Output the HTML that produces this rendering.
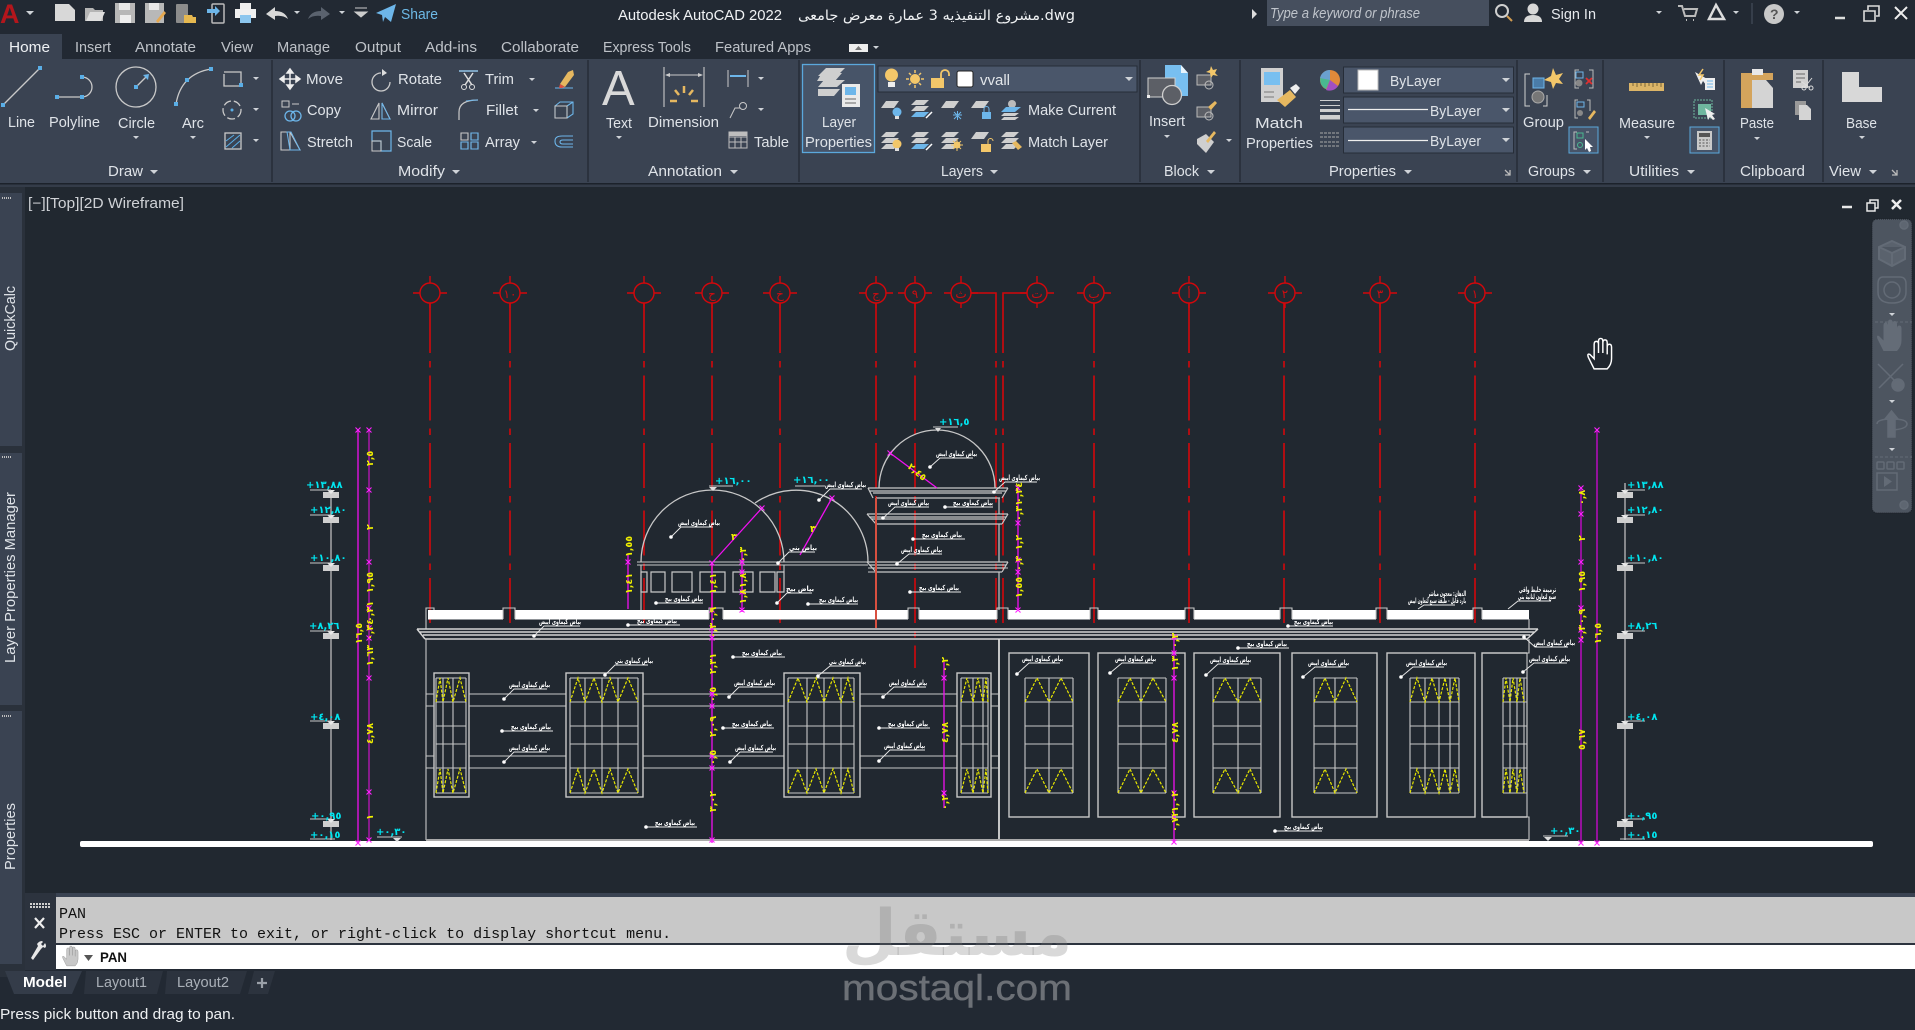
<!DOCTYPE html>
<html><head><meta charset="utf-8"><title>Autodesk AutoCAD 2022</title>
<style>
html,body{margin:0;padding:0;background:#222933;width:1915px;height:1030px;overflow:hidden}
svg{display:block;position:absolute;left:0;top:0}
text{font-family:"Liberation Sans","DejaVu Sans",sans-serif}
.t{font-size:14.500px;fill:#dfe3e8}
.b{font-size:14.500px;fill:#e6e9ed}
.m{font-family:"Liberation Mono",monospace;font-size:15px;fill:#111}
.l{font-family:"DejaVu Sans",sans-serif;font-size:7px;font-weight:bold;fill:#fff}
.c{font-family:"DejaVu Sans",sans-serif;font-size:10px;font-weight:bold;fill:#00e6f0}
.y{font-family:"DejaVu Sans",sans-serif;font-size:9.500px;font-weight:bold;fill:#f0f000}
.r{font-family:"DejaVu Sans",sans-serif;font-size:12px;fill:#d00c10}
</style></head><body>
<svg width="1915" height="1030" viewBox="0 0 1915 1030" xmlns="http://www.w3.org/2000/svg">
<defs>
<path id="t" d="M0 0h8l-4 4z" fill="#cfd3d8"/>
<path id="ts" d="M0 0h6l-3 3z" fill="#cfd3d8"/>
<g id="bub" fill="none" stroke="#d4070b" stroke-width="1.400"><circle r="10"/><path d="M-17 0H-10M10 0H17M0 -17V-10M0 10V15"/></g>
<g id="sq"><rect x="-2" y="-2" width="4" height="4" fill="#5aaee6"/></g>
<path id="x" d="M-2.500 -2.500L2.500 2.500M-2.500 2.500L2.500 -2.500" stroke="#ff20ff" stroke-width="1.100" fill="none"/>
<g id="sheet"><path d="M5 0H18L13 7H0Z" fill="#cfcfcf"/></g>
<g id="stack"><path d="M5 0H18L13 5H0Z" fill="#cfcfcf"/><path d="M5 6H18L13 11H0Z" fill="#cfcfcf"/><path d="M5 12H18L13 17H0Z" fill="#cfcfcf"/></g>
<g id="stackb"><path d="M5 0H18L13 5H0Z" fill="#cfcfcf"/><path d="M5 6H18L13 11H0Z" fill="#cfcfcf"/><path d="M5 12H18L13 17H0Z" fill="#6db6ea"/></g>
<path id="hand" d="M7 22L3 14Q2 11 4 12L7 15V5Q7 3 8.500 3Q10 3 10 5V11V3Q10 1 11.500 1Q13 1 13 3V11V4Q13 2 14.500 2Q16 2 16 4V12V7Q16 5 17.500 5Q19 5 19 7V15Q19 19 16 22Z"/>
<g id="lvl"><rect x="-8" y="2" width="16" height="6" fill="#cfcfcf"/><path d="M-4 0H4L0 4Z" fill="#e8e8e8"/></g>
</defs>

<!-- backgrounds -->
<rect width="1915" height="1030" fill="#222933"/>
<rect y="59" width="1915" height="124" fill="#3a4352"/>
<rect y="0" width="1915" height="59" fill="#222933"/>
<rect y="183" width="1915" height="1.500" fill="#1c222b"/>
<rect y="184.500" width="1915" height="3" fill="#343c49"/>
<rect y="187" x="22" width="1893" height="708" fill="#212830"/>
<rect x="0" y="187" width="25" height="790" fill="#2a313b"/>
<rect x="0" y="193" width="22" height="253" fill="#3a4352"/>
<rect x="0" y="453" width="22" height="252" fill="#3a4352"/>
<rect x="0" y="711" width="22" height="253" fill="#3a4352"/>
<rect y="34" width="62" height="25" fill="#3a4352"/>

<!-- separators -->
<path d="M272 60V182M588 60V182M799 60V182M1140 60V182M1240 60V182M1517 60V182M1603 60V182M1724 60V182M1823 60V182" stroke="#262d38" stroke-width="1.500"/>

<!-- tabs -->
<g>
<text x="9" y="52" class="t" style="fill:#eef1f4" textLength="41" lengthAdjust="spacingAndGlyphs">Home</text>
<g style="opacity:.82">
<text x="75" y="52" class="t" textLength="36" lengthAdjust="spacingAndGlyphs">Insert</text>
<text x="135" y="52" class="t" textLength="61" lengthAdjust="spacingAndGlyphs">Annotate</text>
<text x="221" y="52" class="t" textLength="32" lengthAdjust="spacingAndGlyphs">View</text>
<text x="277" y="52" class="t" textLength="53" lengthAdjust="spacingAndGlyphs">Manage</text>
<text x="355" y="52" class="t" textLength="46" lengthAdjust="spacingAndGlyphs">Output</text>
<text x="425" y="52" class="t" textLength="52" lengthAdjust="spacingAndGlyphs">Add-ins</text>
<text x="501" y="52" class="t" textLength="78" lengthAdjust="spacingAndGlyphs">Collaborate</text>
<text x="603" y="52" class="t" textLength="88" lengthAdjust="spacingAndGlyphs">Express Tools</text>
<text x="715" y="52" class="t" textLength="96" lengthAdjust="spacingAndGlyphs">Featured Apps</text>
</g></g>
<rect x="849" y="44" width="19" height="8" fill="#eee"/><path d="M855 50h7l-3.500-4z" fill="#777"/><use href="#ts" x="873" y="46"/>

<!-- title bar text -->
<text x="618" y="20" class="b" textLength="164" lengthAdjust="spacingAndGlyphs" style="fill:#f0f2f4">Autodesk AutoCAD 2022</text>
<text x="798" y="20" style="font-size:14px;fill:#f0f2f4;font-family:'DejaVu Sans',sans-serif" textLength="277" lengthAdjust="spacingAndGlyphs">مشروع التنفيذيه 3 عمارة معرض جامعى.dwg</text>
<path d="M1252 9l5 5-5 5z" fill="#ddd"/>
<rect x="1267" y="0" width="222" height="26" fill="#464f5e"/>
<text x="1270" y="18" style="font-size:14.500px;font-style:italic;fill:#bfc4cb" textLength="150" lengthAdjust="spacingAndGlyphs">Type a keyword or phrase</text>
<g fill="none" stroke="#cfcfcf" stroke-width="2"><circle cx="1502" cy="11" r="6"/></g><path d="M1507 16l5 5" stroke="#d09a50" stroke-width="2"/>
<circle cx="1533" cy="9" r="5.500" fill="#d8d8d8"/><path d="M1524 22q0-7 9-7t9 7z" fill="#d8d8d8"/>
<text x="1551" y="19" class="b" textLength="45" lengthAdjust="spacingAndGlyphs">Sign In</text>
<use href="#ts" x="1656" y="11"/>
<path d="M1678 6h4l3 10h10l2-7h-13M1686 20h1M1693 20h1" fill="none" stroke="#bbb" stroke-width="2"/>
<path d="M1716 5l-7 14h15z" fill="none" stroke="#ddd" stroke-width="2.500"/><use href="#ts" x="1733" y="11"/>
<path d="M1752 3V24" stroke="#4a5260"/>
<circle cx="1774" cy="14" r="10" fill="#c8c8c8"/><text x="1770" y="19" style="font-size:14px;font-weight:bold;fill:#555">?</text>
<use href="#ts" x="1794" y="11"/>
<path d="M1835 18h10" stroke="#ddd" stroke-width="2.500"/>
<path d="M1864 11h11v10h-11zM1868 10V6h11v10h-3" fill="none" stroke="#ddd" stroke-width="1.600"/>
<path d="M1895 7L1907 19M1907 7L1895 19" stroke="#eee" stroke-width="2"/>

<!-- QAT -->
<text x="0" y="23" style="font-size:27px;font-weight:bold;fill:#b3161c">A</text>
<use href="#t" x="26" y="11"/>
<path d="M55 4h14l6 6v11H55z" fill="#d8d8d8"/>
<path d="M85 8h8l2 2h8v11H85z" fill="#b5b5b5"/><path d="M86 21l4-9h15l-4 9z" fill="#dedede"/>
<path d="M115 3h20v20h-20z" fill="#b8b8b8"/><rect x="119" y="3" width="11" height="7" fill="#e8e8e8"/><rect x="120" y="15" width="11" height="8" fill="#eee"/>
<path d="M145 3h19v20h-19z" fill="#b8b8b8"/><rect x="149" y="3" width="10" height="7" fill="#e8e8e8"/><path d="M156 21l8-10 2 2-8 10z" fill="#e6a84f"/>
<rect x="176" y="4" width="12" height="19" rx="1" fill="#8c8c8c"/><path d="M184 15h8l1 2h3v6h-12z" fill="#e6b850"/>
<rect x="212" y="4" width="12" height="19" rx="1" fill="none" stroke="#bbb" stroke-width="1.500"/><path d="M207 9h8v-3l5 5-5 5v-3h-8z" fill="#6db6ea"/>
<rect x="240" y="3" width="11" height="6" fill="#eee"/><rect x="235" y="9" width="21" height="9" fill="#f0f0f0"/><rect x="240" y="15" width="11" height="8" fill="#8cc6ee"/>
<path d="M266 14l9-7v4q10 0 13 8-5-4-13-3v4z" fill="#d8d8d8"/><use href="#ts" x="294" y="11"/>
<path d="M330 14l-9-7v4q-10 0-13 8 5-4 13-3v4z" fill="#5a626e"/><use href="#ts" x="339" y="11"/>
<path d="M355 8h12M355 12h12l-6 5z" stroke="#ccc" fill="#ccc"/>
<path d="M376 13L396 4l-5 18-6-5-2 5-1-7z" fill="#6db6ea"/>
<text x="401" y="19" style="font-size:14.500px;fill:#6db9e6" textLength="37" lengthAdjust="spacingAndGlyphs">Share</text>

<!-- Draw panel -->
<g fill="none" stroke="#c9c9c9" stroke-width="1.300">
<path d="M3 105L40 68"/>
<path d="M57 97H82A10 10 0 0 0 82 77"/>
<circle cx="136" cy="87" r="20"/><path d="M136 87L147 76"/>
<path d="M176 104Q181 74 211 69"/>
<path d="M224 74V86H241V72H224"/>
<circle cx="232" cy="110" r="9" stroke-dasharray="8 3"/>
<rect x="225" y="133" width="16" height="16"/>
</g>
<path d="M226 147L240 135M226 141L234 135M232 148L240 141" stroke="#5aaee6" fill="none"/>
<circle cx="232" cy="110" r="1.500" fill="#5aaee6"/>
<path d="M149 74l-6 1 5 5z" fill="#6db6ea"/>
<use href="#sq" x="3" y="105"/><use href="#sq" x="40" y="68"/><use href="#sq" x="57" y="97"/><use href="#sq" x="82" y="97"/><use href="#sq" x="82" y="77"/><use href="#sq" x="136" y="87"/><use href="#sq" x="176" y="104"/><use href="#sq" x="187" y="80"/><use href="#sq" x="211" y="69"/><use href="#sq" x="241" y="85"/>
<text x="8" y="127" class="t" textLength="27" lengthAdjust="spacingAndGlyphs">Line</text>
<text x="49" y="127" class="t" textLength="51" lengthAdjust="spacingAndGlyphs">Polyline</text>
<text x="118" y="128" class="t" textLength="37" lengthAdjust="spacingAndGlyphs">Circle</text>
<text x="182" y="128" class="t" textLength="22" lengthAdjust="spacingAndGlyphs">Arc</text>
<use href="#ts" x="133" y="136"/><use href="#ts" x="190" y="136"/>
<use href="#ts" x="253" y="77"/><use href="#ts" x="253" y="108"/><use href="#ts" x="253" y="139"/>
<text x="108" y="176" class="t" textLength="35" lengthAdjust="spacingAndGlyphs">Draw</text><use href="#t" x="150" y="170"/>

<!-- Modify -->
<path d="M290 70v18M281 79h18M290 69l-3 4h6zM290 89l-3-4h6zM280 79l4-3v6zM300 79l-4-3v6z" stroke="#eee" stroke-width="1.500" fill="#eee"/>
<path d="M381 74a9 9 0 1 0 9 9" fill="none" stroke="#c9c9c9" stroke-width="1.300" transform="translate(0 -1)"/><path d="M382 69l5 4-5 3z" fill="#ddd"/>
<path d="M282 101h7v6h-7zM292 104h7" fill="none" stroke="#c9c9c9"/><circle cx="290" cy="116" r="5" fill="none" stroke="#6db6ea" stroke-width="1.300"/><circle cx="296" cy="116" r="5" fill="none" stroke="#6db6ea" stroke-width="1.300"/>
<path d="M371 119L379 103V119ZM390 119L382 103V119Z" fill="none" stroke="#c9c9c9" stroke-width="1.100"/><path d="M390 119L382 103V119Z" fill="none" stroke="#6db6ea"/>
<path d="M281 132h9v18h-9zM290 132l10 18h-10" fill="none" stroke="#c9c9c9" stroke-width="1.100"/><path d="M290 150l-3-18h4l9 18z" fill="none" stroke="#6db6ea"/>
<path d="M372 131h19v20h-10v-10h-9z" fill="none" stroke="#6db6ea" stroke-width="1.200"/><rect x="372" y="141" width="9" height="10" fill="none" stroke="#c9c9c9"/>
<path d="M459 71h19M464 73l8 12M473 73l-8 12" stroke="#ddd" stroke-width="1.500" fill="none"/><circle cx="464" cy="87" r="2.500" fill="none" stroke="#ddd"/><circle cx="472" cy="87" r="2.500" fill="none" stroke="#ddd"/><path d="M459 71h19" stroke="#6db6ea"/>
<path d="M459 120V112Q459 100 478 100" fill="none" stroke="#c9c9c9" stroke-width="1.200"/><path d="M466 101Q473 100 478 100" stroke="#6db6ea" fill="none"/>
<path d="M461 133h7v7h-7zM471 133h7v7h-7zM461 142h7v7h-7zM471 142h7v7h-7z" fill="none" stroke="#c9c9c9" stroke-width="1.100"/><path d="M461 142h7v7h-7zM471 142h7v7h-7zM471 133h7v7h-7z" fill="none" stroke="#6db6ea" stroke-width="1.100"/>
<path d="M573 70l1 5-9 12-5-3 8-12z" fill="#e6b860"/><path d="M555 88h18" stroke="#6db6ea"/><path d="M560 84l5 3-3 1h-3z" fill="#dd5040"/>
<path d="M555 106h12v12h-12zM555 106l5-4h13v12l-6 4M567 106l6-4" fill="none" stroke="#6db6ea" stroke-width="1.100"/><rect x="555" y="106" width="12" height="12" fill="none" stroke="#c9c9c9"/>
<path d="M573 136H562Q555 136 555 141Q555 147 562 147H573M573 140H563Q560 140 560 142Q560 144 563 144H573" fill="none" stroke="#6db6ea" stroke-width="1.100"/>
<use href="#ts" x="529" y="78"/><use href="#ts" x="533" y="109"/><use href="#ts" x="531" y="141"/>
<text x="306" y="84" class="t" textLength="37" lengthAdjust="spacingAndGlyphs">Move</text>
<text x="398" y="84" class="t" textLength="44" lengthAdjust="spacingAndGlyphs">Rotate</text>
<text x="485" y="84" class="t" textLength="29" lengthAdjust="spacingAndGlyphs">Trim</text>
<text x="307" y="115" class="t" textLength="34" lengthAdjust="spacingAndGlyphs">Copy</text>
<text x="397" y="115" class="t" textLength="41" lengthAdjust="spacingAndGlyphs">Mirror</text>
<text x="486" y="115" class="t" textLength="32" lengthAdjust="spacingAndGlyphs">Fillet</text>
<text x="307" y="147" class="t" textLength="46" lengthAdjust="spacingAndGlyphs">Stretch</text>
<text x="397" y="147" class="t" textLength="35" lengthAdjust="spacingAndGlyphs">Scale</text>
<text x="485" y="147" class="t" textLength="35" lengthAdjust="spacingAndGlyphs">Array</text>
<text x="398" y="176" class="t" textLength="47" lengthAdjust="spacingAndGlyphs">Modify</text><use href="#t" x="452" y="170"/>

<!-- Annotation -->
<text x="602" y="105" style="font-size:49px;fill:#d9d9d9">A</text>
<text x="606" y="128" class="t" textLength="26" lengthAdjust="spacingAndGlyphs">Text</text><use href="#ts" x="616" y="136"/>
<path d="M664 67V107M704 67V107M666 75H702" stroke="#c9c9c9" fill="none" stroke-width="1.100"/><path d="M665 75l5-2v4zM703 75l-5-2v4z" fill="#ccc"/>
<path d="M684 86v7M675 90l4 5M693 90l-4 5M670 101h7M698 101h-7" stroke="#e6b860" stroke-width="2.500" fill="none"/>
<text x="648" y="127" class="t" textLength="71" lengthAdjust="spacingAndGlyphs">Dimension</text>
<path d="M728 70V87M748 70V87M730 76H746" stroke="#c9c9c9" fill="none"/><path d="M730 76H746" stroke="#6db6ea" stroke-width="2"/>
<use href="#ts" x="758" y="77"/>
<circle cx="743" cy="106" r="3.500" fill="none" stroke="#c9c9c9"/><path d="M740 108L735 108L730 118" fill="none" stroke="#c9c9c9"/>
<use href="#ts" x="758" y="108"/>
<rect x="729" y="132" width="18" height="16" fill="none" stroke="#bdbdbd"/><path d="M729 137H747M729 142H747M735 137V148M741 137V148" stroke="#bdbdbd"/><rect x="729" y="132" width="18" height="4" fill="#bdbdbd"/>
<text x="754" y="147" class="t" textLength="35" lengthAdjust="spacingAndGlyphs">Table</text>
<text x="648" y="176" class="t" textLength="74" lengthAdjust="spacingAndGlyphs">Annotation</text><use href="#t" x="730" y="170"/>

<!-- Layers -->
<rect x="802.500" y="64.500" width="72" height="88" fill="#475468" stroke="#5ba8dc" stroke-width="1.300"/>
<path d="M826 68h19l-8 8h-19zM822 73h20l-7 8h-18zM824 80h21l-8 7h-19zM818 89h22l-6 7h-16z" fill="#cfcfcf"/>
<rect x="842" y="84" width="18" height="23" fill="#eaeaea"/><rect x="845" y="87" width="11" height="8" fill="#6db6ea"/><path d="M845 99h11M845 103h11" stroke="#666"/>
<text x="822" y="127" class="t" textLength="34" lengthAdjust="spacingAndGlyphs">Layer</text>
<text x="805" y="147" class="t" textLength="67" lengthAdjust="spacingAndGlyphs">Properties</text>
<rect x="878" y="66" width="259" height="26" fill="#4a566a" stroke="#262d38"/>
<circle cx="891.500" cy="75" r="6.500" fill="#f3c76a"/><rect x="888" y="82" width="7" height="5" fill="#eee"/>
<circle cx="915" cy="79" r="5" fill="#f3c76a"/><path d="M915 70v3M915 85v3M906 79h3M921 79h3M909 73l2 2M921 73l-2 2M909 85l2-2M921 85l-2-2" stroke="#f3c76a" stroke-width="1.500"/>
<rect x="931" y="78" width="13" height="10" fill="#f3c76a"/><path d="M941 78v-4a4 4 0 0 1 8 0v2" fill="none" stroke="#f3c76a" stroke-width="1.800"/>
<rect x="957" y="71" width="16" height="16" rx="2" fill="#fff" stroke="#222"/>
<text x="980" y="85" class="t" textLength="30" lengthAdjust="spacingAndGlyphs" style="fill:#e2e6ea">vvall</text>
<use href="#t" x="1125" y="77"/>
<!-- layer small icons -->
<g transform="translate(881 101)"><use href="#sheet"/><circle cx="16" cy="11" r="4.500" fill="#6db6ea"/><rect x="14" y="15" width="4" height="3" fill="#ddd"/></g>
<g transform="translate(911 100)"><use href="#stackb"/><path d="M21 12l-6 6" stroke="#fff" stroke-width="1.500"/></g>
<g transform="translate(941 101)"><use href="#sheet"/><path d="M12 14h9M16.500 10v9M13 11l7 7M20 11l-7 7" stroke="#6db6ea"/></g>
<g transform="translate(971 101)"><use href="#sheet"/><rect x="11" y="11" width="9" height="7" fill="#6db6ea"/><path d="M13 11V8a2.500 2.500 0 0 1 5 0v3" fill="none" stroke="#6db6ea"/></g>
<g transform="translate(1001 100)"><circle cx="11" cy="4" r="4" fill="#bbb"/><path d="M5 7H20L14 12H0Z" fill="#6db6ea"/><path d="M3 13H18L14 16H0ZM3 17H18L14 20H0Z" fill="#cfcfcf"/></g>
<g transform="translate(881 132)"><use href="#stack"/><circle cx="16" cy="12" r="4.500" fill="#f3c76a"/><rect x="14" y="16" width="4" height="3" fill="#ddd"/></g>
<g transform="translate(911 132)"><use href="#stackb"/><path d="M15 18l6-6" stroke="#fff" stroke-width="1.500"/></g>
<g transform="translate(941 132)"><use href="#stack"/><circle cx="16" cy="13" r="3.500" fill="#f3c76a"/><path d="M16 7v12M10 13h12M12 9l8 8M20 9l-8 8" stroke="#f3c76a"/></g>
<g transform="translate(971 132)"><use href="#sheet"/><rect x="10" y="12" width="10" height="8" fill="#f3c76a"/><path d="M17 12V9a2.500 2.500 0 0 1 5 0" fill="none" stroke="#f3c76a"/></g>
<g transform="translate(1001 132)"><use href="#stack"/><path d="M11 11l6 7 4-3-6-6z" fill="#e6b860"/></g>
<text x="1028" y="115" class="t" textLength="88" lengthAdjust="spacingAndGlyphs">Make Current</text>
<text x="1028" y="147" class="t" textLength="80" lengthAdjust="spacingAndGlyphs">Match Layer</text>
<text x="941" y="176" class="t" textLength="42" lengthAdjust="spacingAndGlyphs">Layers</text><use href="#t" x="990" y="170"/>

<!-- Block -->
<path d="M1165 65h16l7 8v23h-23z" fill="#78bff0"/><path d="M1181 65l7 8h-7z" fill="#e8f4fc"/>
<rect x="1148" y="78" width="27" height="19" fill="#5c5f66" stroke="#d0d0d0"/><circle cx="1172" cy="95" r="9.500" fill="#5c5f66" stroke="#cfcfcf" stroke-width="1.300"/><rect x="1147" y="95" width="3" height="3" fill="#eee"/>
<rect x="1197" y="75" width="14" height="10" fill="#5c5f66" stroke="#bbb"/><circle cx="1209" cy="85" r="4" fill="none" stroke="#bbb"/><path d="M1211 66l2 4 4-1-2 4 3 3-5-1-2 3-1-5-4-1 4-2z" fill="#f3c76a"/>
<rect x="1197" y="107" width="14" height="10" fill="#5c5f66" stroke="#bbb"/><circle cx="1209" cy="116" r="4" fill="none" stroke="#bbb"/><path d="M1208 107l7-6 2 2-6 7z" fill="#e6b860"/>
<path d="M1197 139l9-5 8 8-8 11-9-9z" fill="#cfcfcf"/><path d="M1206 141l8-10 2 2-8 10z" fill="#e6b860"/>
<use href="#ts" x="1226" y="139"/>
<text x="1149" y="126" class="t" textLength="36" lengthAdjust="spacingAndGlyphs">Insert</text><use href="#ts" x="1164" y="135"/>
<text x="1164" y="176" class="t" textLength="35" lengthAdjust="spacingAndGlyphs">Block</text><use href="#t" x="1207" y="170"/>

<!-- Properties -->
<rect x="1261" y="68" width="22" height="34" fill="#d0d0d0"/><rect x="1264" y="72" width="16" height="13" fill="#78bff0"/><path d="M1264 92h10M1264 97h10" stroke="#777"/>
<path d="M1277 100l13-10 6 7-11 10z" fill="#e6b860"/><path d="M1290 88l5 6 5-6-4-4z" fill="#eee"/>
<text x="1255" y="128" class="t" textLength="48" lengthAdjust="spacingAndGlyphs">Match</text>
<text x="1246" y="148" class="t" textLength="67" lengthAdjust="spacingAndGlyphs">Properties</text>
<circle cx="1330" cy="80" r="10" fill="#e08a3a"/><path d="M1330 80L1322 74A10 10 0 0 0 1326 89Z" fill="#4ab890"/><path d="M1330 80L1326 90A10 10 0 0 0 1338 86Z" fill="#a050c0"/><path d="M1330 80L1320 78A10 10 0 0 1 1330 70Z" fill="#6aa0d0"/>
<path d="M1320 100.500h20M1320 105.500h20" stroke="#cfcfcf"/><rect x="1320" y="109" width="20" height="3" fill="#cfcfcf"/><rect x="1320" y="115" width="20" height="4.500" fill="#cfcfcf"/>
<path d="M1320 133h20M1320 137h20M1320 142h20M1320 146h20" stroke="#a8a8a8" stroke-dasharray="3 1"/>
<g fill="#4a566a" stroke="#262d38"><rect x="1343.500" y="67" width="170" height="26"/><rect x="1343.500" y="97" width="170" height="26"/><rect x="1343.500" y="127" width="170" height="26"/></g>
<rect x="1358" y="70" width="20" height="20" fill="#fff" stroke="#bbb"/>
<path d="M1348 109.500h80M1348 140.500h80" stroke="#eee" stroke-width="1.200"/>
<text x="1390" y="86" class="t" textLength="51" lengthAdjust="spacingAndGlyphs">ByLayer</text>
<text x="1430" y="116" class="t" textLength="51" lengthAdjust="spacingAndGlyphs">ByLayer</text>
<text x="1430" y="146" class="t" textLength="51" lengthAdjust="spacingAndGlyphs">ByLayer</text>
<use href="#t" x="1502" y="78"/><use href="#t" x="1502" y="108"/><use href="#t" x="1502" y="138"/>
<text x="1329" y="176" class="t" textLength="67" lengthAdjust="spacingAndGlyphs">Properties</text><use href="#t" x="1404" y="170"/>
<path d="M1505 170l5 5M1510 170v5h-5" stroke="#bbb" fill="none" stroke-width="1.300"/>

<!-- Groups -->
<path d="M1530 74h-5v32h5M1547 95v11h-4" fill="none" stroke="#d0d0d0"/><rect x="1533" y="78" width="11" height="10" fill="#4a7ca8" stroke="#6db6ea"/><circle cx="1538" cy="97" r="6" fill="#777" stroke="#aaa"/>
<path d="M1553 68l3 7 7-2-4 6 4 5-7-1-3 6-2-7-7-2 7-4z" fill="#f3c76a"/>
<text x="1523" y="127" class="t" textLength="41" lengthAdjust="spacingAndGlyphs">Group</text>
<path d="M1579 70h-4v18h4M1589 70h4v18h-4" fill="none" stroke="#bbb"/><rect x="1576" y="72" width="7" height="6" fill="none" stroke="#6db6ea"/><circle cx="1579" cy="83" r="3.500" fill="#888"/><path d="M1586 78l6 6M1592 78l-6 6" stroke="#e03030" stroke-width="1.800"/>
<path d="M1578 100h-3v18h3M1587 100h3v11" fill="none" stroke="#bbb"/><rect x="1577" y="102" width="7" height="5" fill="none" stroke="#6db6ea"/><circle cx="1580" cy="113" r="3" fill="#888"/><path d="M1588 118l6-8 2 2-6 8z" fill="#e6b860"/>
<rect x="1569" y="127" width="29" height="26" fill="#475468" stroke="#5ba8dc"/><path d="M1577 132h-3v17h3M1586 132h3" fill="none" stroke="#bbb"/><rect x="1577" y="133" width="6" height="5" fill="none" stroke="#4ab890"/><circle cx="1580" cy="145" r="2.500" fill="none" stroke="#4ab890"/><path d="M1585 139l8 8-3 0 1 4-2 1-2-4-2 2z" fill="#fff"/>
<text x="1528" y="176" class="t" textLength="47" lengthAdjust="spacingAndGlyphs">Groups</text><use href="#t" x="1583" y="170"/>

<!-- Utilities -->
<rect x="1629" y="83" width="35" height="8" fill="#dcb567"/><path d="M1633 83v3M1637 83v4M1641 83v3M1645 83v4M1649 83v3M1653 83v4M1657 83v3M1661 83v4" stroke="#7a6638"/>
<text x="1619" y="128" class="t" textLength="56" lengthAdjust="spacingAndGlyphs">Measure</text><use href="#ts" x="1644" y="136"/>
<path d="M1695 72l6 13 2-4 3 4 2-1-3-4 4 0z" fill="#eee"/><rect x="1705" y="78" width="10" height="12" fill="#eee"/><path d="M1707 81h6M1707 84h6M1707 87h6" stroke="#6db6ea"/><path d="M1703 69l-4 6h4l-3 5" stroke="#f3c76a" fill="none" stroke-width="1.500"/>
<rect x="1694" y="100" width="18" height="18" fill="none" stroke="#6fb79f" stroke-dasharray="2 1"/><rect x="1698" y="104" width="13" height="11" fill="#6fb79f"/><path d="M1705 108l3 12 2-3 3 3 2-1-3-4 3-1z" fill="#eee"/>
<rect x="1690" y="127" width="29" height="26" fill="#475468" stroke="#5ba8dc"/><rect x="1697" y="131" width="15" height="19" fill="#c9c9c9"/><rect x="1699" y="133" width="11" height="4" fill="#555"/><path d="M1699 140h11M1699 143h11M1699 146h11" stroke="#555" stroke-dasharray="2 1.500"/>
<text x="1629" y="176" class="t" textLength="50" lengthAdjust="spacingAndGlyphs">Utilities</text><use href="#t" x="1687" y="170"/>

<!-- Clipboard -->
<path d="M1741 73h32v7h-21v28h-11z" fill="#d4a45c"/><rect x="1752" y="69" width="11" height="6" fill="#e8e8e8"/><path d="M1752 80h14l7 8v20h-21z" fill="#d4d4d4"/>
<text x="1740" y="128" class="t" textLength="34" lengthAdjust="spacingAndGlyphs">Paste</text><use href="#ts" x="1754" y="137"/>
<rect x="1793" y="70" width="15" height="18" fill="#d0d0d0"/><path d="M1796 74h9M1796 78h9M1796 82h5" stroke="#666"/><path d="M1802 82l8 6M1812 78l-8 10" stroke="#ddd"/><circle cx="1804" cy="88" r="2" fill="none" stroke="#ddd"/><circle cx="1811" cy="88" r="2" fill="none" stroke="#ddd"/>
<rect x="1795" y="101" width="11" height="14" fill="#9a9a9a"/><path d="M1799 105h8l4 4v11h-12z" fill="#d4d4d4"/>
<text x="1740" y="176" class="t" textLength="65" lengthAdjust="spacingAndGlyphs">Clipboard</text>

<!-- View -->
<path d="M1842 72h17v15h23v15h-40z" fill="#d8d8d8"/>
<text x="1846" y="128" class="t" textLength="31" lengthAdjust="spacingAndGlyphs">Base</text><use href="#ts" x="1859" y="136"/>
<text x="1829" y="176" class="t" textLength="32" lengthAdjust="spacingAndGlyphs">View</text><use href="#t" x="1869" y="170"/>
<path d="M1892 170l5 5M1897 170v5h-5" stroke="#bbb" fill="none" stroke-width="1.300"/>

<!-- left palettes -->
<path d="M2 198h9M2 457h9M2 716h9" stroke="#bdbdbd" stroke-width="2" stroke-dasharray="1 1"/>
<text transform="translate(15 351) rotate(-90)" class="t" textLength="65" lengthAdjust="spacingAndGlyphs">QuickCalc</text>
<text transform="translate(15 663) rotate(-90)" class="t" textLength="171" lengthAdjust="spacingAndGlyphs">Layer Properties Manager</text>
<text transform="translate(15 870) rotate(-90)" class="t" textLength="67" lengthAdjust="spacingAndGlyphs">Properties</text>

<!-- viewport label -->
<text x="28" y="208" style="font-size:14.500px;fill:#cfd2d6" textLength="156" lengthAdjust="spacingAndGlyphs">[−][Top][2D Wireframe]</text>
<path d="M1842 207h10" stroke="#e8e8e8" stroke-width="2.500"/>
<path d="M1867 203h8v8h-8zM1870 203v-3h8v8h-3" fill="none" stroke="#e8e8e8" stroke-width="1.500"/>
<path d="M1892 200l9 9M1901 200l-9 9" stroke="#eee" stroke-width="2.500"/>

<!-- nav bar -->
<rect x="1872" y="219" width="40" height="294" rx="5" fill="#4d5560" stroke="#1a1f26" stroke-dasharray="1 1"/>
<g fill="none" stroke="#636b76" stroke-width="1.500">
<circle cx="1904" cy="225" r="4" fill="#5e6671"/>
<path d="M1892 241l13 6v12l-13 7-13-7v-12zM1879 247l13 6 13-6M1892 253v13" stroke-width="2" fill="#5a626d"/>
<path d="M1883 277h17q6 0 6 7v8q0 11-14 11t-14-11v-8q0-7 5-7z"/><circle cx="1892" cy="290" r="8"/>
<path d="M1875 322h37M1875 457h37" stroke-dasharray="3 2" stroke-width="1"/>
<path d="M1878 364L1901 387M1903 364L1879 388"/><circle cx="1898" cy="385" r="6" fill="#636b76"/>
<path d="M1877 424q0-5 15-5t15 5-15 6"/><path d="M1888 419v18h7v-18h3l-6.500-8-6.500 8z" fill="#636b76"/>
<rect x="1877" y="462" width="7" height="7" rx="1"/><rect x="1887" y="462" width="7" height="7" rx="1"/><rect x="1897" y="462" width="7" height="7" rx="1"/>
<rect x="1877" y="473" width="20" height="17"/>
<circle cx="1904" cy="505" r="4" fill="#5e6671"/>
</g>
<use href="#hand" transform="translate(1873 318) scale(1.500)" fill="#646c77"/>
<path d="M1884 487v-11l8 5.500z" fill="#636b76"/>
<use href="#ts" x="1889" y="313"/><use href="#ts" x="1889" y="400"/><use href="#ts" x="1889" y="448"/>

<!-- drawing: axes -->
<g stroke="#d4070b" stroke-width="1.600" fill="none">
<g stroke-dasharray="45 8 6.500 8">
<path d="M430 308V629M510 308V629M644 308V624M712 308V610M780 308V628M876 308V629M915 308V668M1094 308V629M1189 308V629M1284 308V629M1380 308V629M1475 308V629M996 308V629M1003 308V629"/>
</g>
<path d="M430 303v5M510 303v5M644 303v5M712 303v5M780 303v5M876 303v5M915 303v5M1094 303v5M1189 303v5M1284 303v5M1380 303v5M1475 303v5"/>
<path d="M971 293H996V308M1027 293H1003V308"/>
</g>
<use href="#bub" x="430" y="293"/><use href="#bub" x="510" y="293"/><use href="#bub" x="644" y="293"/><use href="#bub" x="712" y="293"/><use href="#bub" x="780" y="293"/><use href="#bub" x="876" y="293"/><use href="#bub" x="915" y="293"/><use href="#bub" x="961" y="293"/><use href="#bub" x="1037" y="293"/><use href="#bub" x="1094" y="293"/><use href="#bub" x="1189" y="293"/><use href="#bub" x="1285" y="293"/><use href="#bub" x="1380" y="293"/><use href="#bub" x="1475" y="293"/>
<text x="510" y="298" class="r" text-anchor="middle">١٠</text><text x="712" y="298" class="r" text-anchor="middle">ح</text><text x="780" y="298" class="r" text-anchor="middle">خ</text><text x="876" y="298" class="r" text-anchor="middle">ج</text><text x="915" y="298" class="r" text-anchor="middle">٩</text><text x="961" y="298" class="r" text-anchor="middle">ث</text><text x="1037" y="298" class="r" text-anchor="middle">ت</text><text x="1094" y="298" class="r" text-anchor="middle">ب</text><text x="1189" y="298" class="r" text-anchor="middle">أ</text><text x="1285" y="298" class="r" text-anchor="middle">٢</text><text x="1380" y="298" class="r" text-anchor="middle">٣</text><text x="1475" y="298" class="r" text-anchor="middle">١</text>

<!-- drawing: building -->
<g fill="#fff">
<rect x="428" y="610" width="75" height="9.500"/><rect x="515" y="610" width="194" height="9.500"/><rect x="723" y="610" width="185" height="9.500"/><rect x="919" y="610" width="78" height="9.500"/><rect x="1008" y="610" width="82" height="9.500"/><rect x="1098" y="610" width="87" height="9.500"/><rect x="1194" y="610" width="86" height="9.500"/><rect x="1292" y="610" width="84" height="9.500"/><rect x="1387" y="610" width="86" height="9.500"/><rect x="1482" y="610" width="47" height="9.500"/>
<rect x="80" y="841" width="1793" height="6" rx="2"/>
</g>
<g fill="none" stroke="#c8c8c8" stroke-width="1.100">
<!-- merlons -->
<path d="M426 629V608H434V610M503 619V608H515V619M709 619V608H723V619M908 619V608H919V619M997 619V608H1008V619M1090 619V608H1098V619M1185 619V608H1194V619M1280 619V608H1292V619M1376 619V608H1387V619M1473 619V608H1482V619M1529 619V629"/>
<!-- cornice -->
<path d="M417 629H1538M420 632H1534M423 635H1530M425 639H1527M417 629L425 639M1538 629L1527 639" stroke-width="1.500" stroke="#d4d4d4"/>
<!-- walls -->
<path d="M426 639V840M1529 639V653H1527V817H1529V840" stroke-width="1.100"/>
<path d="M999 639V840" stroke-width="1.800" stroke="#d8d8d8"/>
<path d="M426 840H1529" stroke="#aaa" stroke-width="2"/>
<!-- bands -->
<path d="M426 694H434M426 706H434M426 756H434M426 768H434M469 694H566M469 706H566M469 756H566M469 768H566M643 694H784M643 706H784M643 756H784M643 768H784M860 694H957M860 706H957M860 756H957M860 768H957M991 694H999M991 706H999M991 756H999M991 768H999"/>
<!-- window outers -->
<rect x="434" y="673" width="35" height="124" stroke-width="1.400"/><rect x="566" y="673" width="77" height="124" stroke-width="1.400"/><rect x="784" y="673" width="76" height="124" stroke-width="1.400"/><rect x="957" y="673" width="34" height="124" stroke-width="1.400"/>
<rect x="1009" y="653" width="80" height="164" stroke-width="1.400"/><rect x="1098" y="653" width="87" height="164" stroke-width="1.400"/><rect x="1194" y="653" width="86" height="164" stroke-width="1.400"/><rect x="1292" y="653" width="85" height="164" stroke-width="1.400"/><rect x="1387" y="653" width="88" height="164" stroke-width="1.400"/><path d="M1527 653H1482V817H1527" stroke-width="1.400"/>
<!-- grids -->
<path d="M436 678V793M443 678V793M453 678V793M466 678V793M436 678H466M436 702H466M436 726H466M436 744H466M436 768H466M436 793H466"/>
<path d="M570 678V793M585 678V793M602 678V793M618 678V793M638 678V793M570 678H638M570 702H638M570 726H638M570 744H638M570 768H638M570 793H638"/>
<path d="M788 678V793M807 678V793M824 678V793M841 678V793M854 678V793M788 678H854M788 702H854M788 726H854M788 744H854M788 768H854M788 793H854"/>
<path d="M961 678V793M973 678V793M983 678V793M988 678V793M961 678H988M961 702H988M961 726H988M961 744H988M961 768H988M961 793H988"/>
<path d="M1025 678V793M1049 678V793M1073 678V793M1025 678H1073M1025 702H1073M1025 726H1073M1025 744H1073M1025 768H1073M1025 793H1073"/>
<path d="M1118 678V793M1141 678V793M1166 678V793M1118 678H1166M1118 702H1166M1118 726H1166M1118 744H1166M1118 768H1166M1118 793H1166"/>
<path d="M1213 678V793M1238 678V793M1261 678V793M1213 678H1261M1213 702H1261M1213 726H1261M1213 744H1261M1213 768H1261M1213 793H1261"/>
<path d="M1314 678V793M1335 678V793M1357 678V793M1314 678H1357M1314 702H1357M1314 726H1357M1314 744H1357M1314 768H1357M1314 793H1357"/>
<path d="M1410 678V793M1425 678V793M1439 678V793M1450 678V793M1459 678V793M1410 678H1459M1410 702H1459M1410 726H1459M1410 744H1459M1410 768H1459M1410 793H1459"/>
<path d="M1503 678V793M1510 678V793M1517 678V793M1524 678V793M1527 678V793M1503 678H1527M1503 702H1527M1503 726H1527M1503 744H1527M1503 768H1527M1503 793H1527"/>
<!-- domes -->
<path d="M641 562A71.500 72 0 0 1 784 562" stroke-width="1.300"/>
<path d="M755 503A72 72 0 0 1 868 562" stroke-width="1.300"/>
<path d="M879 488A58 58 0 0 1 995 488" stroke-width="1.300"/>
<!-- dome base -->
<path d="M637 562H868M637 565H868M641 565V610M784 565V572M868 568H1008M868 572H1002M876 568V498" />
<path d="M651 572h14v20h-14zM672 572h20v20h-20zM700 572h25v20h-25zM733 572h20v20h-20zM760 572h15v20h-15zM777 572h7v20h-7zM641 572h6v20h-6z" stroke-width="1.200"/>
<!-- tower cornices -->
<path d="M868 488H1008M870 491H1006M873 493H1002M876 498H1000M867 514H1008M869 517H1006M872 519H1004M876 524H1002M867 562H1008M869 565H1006M872 568H1004M876 572H1002M868 488L873 498M1008 488L1002 498M867 514L876 524M1008 514L1002 524M867 562L876 572M1008 562L1002 572" stroke-width="1.200"/>
<path d="M999 498V514M999 524V562M999 572V610" stroke-width="1.200"/>
</g>
<path d="M876 498V628" stroke="#d85040" stroke-width="2"/>

<!-- yellow zigzags -->
<g fill="none" stroke="#e6e600" stroke-width="1.200" stroke-dasharray="3 1.500">
<g id="yz"><path d="M436 702L440 678L443 702L448 678L453 702L460 678L466 702M570 702L578 678L585 702L594 678L602 702L610 678L618 702L628 678L638 702M788 702L798 678L807 702L816 678L824 702L833 678L841 702L848 678L854 702M961 702L967 678L973 702L978 678L983 702L986 678L988 702M1025 702L1037 678L1049 702L1061 678L1073 702M1118 702L1130 678L1141 702L1153 678L1166 702M1213 702L1225 678L1238 702L1250 678L1261 702M1314 702L1325 678L1335 702L1346 678L1357 702M1410 702L1417 678L1425 702L1432 678L1439 702L1445 678L1450 702L1455 678L1459 702M1503 702L1506 678L1510 702L1513 678L1517 702L1520 678L1524 702"/></g>
<use href="#yz" y="91"/>
</g>

<!-- level lines -->
<path d="M331 490V840M1625 483V840" stroke="#bdbdbd" stroke-width="1.300"/>
<g>
<use href="#lvl" x="331" y="490"/><use href="#lvl" x="331" y="515"/><use href="#lvl" x="331" y="563"/><use href="#lvl" x="331" y="631"/><use href="#lvl" x="331" y="721"/><use href="#lvl" x="331" y="819"/>
<use href="#lvl" x="1625" y="490"/><use href="#lvl" x="1625" y="515"/><use href="#lvl" x="1625" y="563"/><use href="#lvl" x="1625" y="631"/><use href="#lvl" x="1625" y="721"/><use href="#lvl" x="1625" y="819"/>
</g>
<path d="M310 490H331M310 515H331M310 563H331M310 631H331M310 721H331M310 819H331M310 839H335M1625 490H1645M1625 515H1645M1625 563H1645M1625 631H1645M1625 721H1645M1625 819H1645M1620 839H1645M377 837H402M1543 836H1568M709 486H733M795 486H825M933 427H958" stroke="#c8c8c8"/>
<path d="M393 838h8l-4 4zM1544 837h8l-4 4zM709 487h8l-4 4zM935 428h6l-3 4z" fill="#ddd"/>
<g>
<text class="c" x="306" y="488">+١٣,٨٨</text><text class="c" x="310" y="513">+١٢,٨٠</text><text class="c" x="310" y="561">+١٠,٨٠</text><text class="c" x="309" y="629">+٨,٢٦</text><text class="c" x="310" y="720">+٤,٠٨</text><text class="c" x="311" y="819">+٠,٩٥</text><text class="c" x="310" y="838">+٠,١٥</text><text class="c" x="376" y="835">+٠,٣٠</text>
<text class="c" x="1627" y="488">+١٣,٨٨</text><text class="c" x="1627" y="513">+١٢,٨٠</text><text class="c" x="1627" y="561">+١٠,٨٠</text><text class="c" x="1627" y="629">+٨,٢٦</text><text class="c" x="1627" y="720">+٤,٠٨</text><text class="c" x="1627" y="819">+٠,٩٥</text><text class="c" x="1627" y="838">+٠,١٥</text><text class="c" x="1550" y="834">+٠,٣٠</text>
<text class="c" x="715" y="484">+١٦,٠٠</text><text class="c" x="793" y="483">+١٦,٠٠</text><text class="c" x="939" y="425">+١٦,٥</text>
</g>

<!-- magenta dims -->
<g fill="none">
<path d="M358 430V843M712 563V843M628 555V609M742 552V612M1018 487V610M944 662V808M1174 637V842M713 562L762 508M800 555L832 498M890 453L937 488" stroke="#f010f0" stroke-width="1.300"/>
<path d="M369 430V840" stroke="#a818a8" stroke-width="1.500"/>
<path d="M1581 487V843M1597 430V843" stroke="#a010a8" stroke-width="1.800"/>
</g>
<g>
<use href="#x" x="358" y="430"/><use href="#x" x="358" y="843"/>
<use href="#x" x="369" y="430"/><use href="#x" x="369" y="490"/><use href="#x" x="369" y="562"/><use href="#x" x="369" y="608"/><use href="#x" x="369" y="628"/><use href="#x" x="369" y="638"/><use href="#x" x="369" y="678"/><use href="#x" x="369" y="792"/><use href="#x" x="369" y="840"/>
<use href="#x" x="712" y="563"/><use href="#x" x="712" y="610"/><use href="#x" x="712" y="628"/><use href="#x" x="712" y="638"/><use href="#x" x="712" y="694"/><use href="#x" x="712" y="706"/><use href="#x" x="712" y="756"/><use href="#x" x="712" y="768"/><use href="#x" x="712" y="840"/>
<use href="#x" x="628" y="562"/><use href="#x" x="742" y="562"/><use href="#x" x="742" y="572"/><use href="#x" x="742" y="592"/><use href="#x" x="742" y="610"/><use href="#x" x="762" y="508"/>
<use href="#x" x="1018" y="488"/><use href="#x" x="1018" y="523"/><use href="#x" x="1018" y="560"/><use href="#x" x="1018" y="572"/><use href="#x" x="1018" y="610"/>
<use href="#x" x="944" y="678"/><use href="#x" x="944" y="793"/>
<use href="#x" x="1174" y="637"/><use href="#x" x="1174" y="653"/><use href="#x" x="1174" y="678"/><use href="#x" x="1174" y="793"/><use href="#x" x="1174" y="817"/><use href="#x" x="1174" y="842"/>
<use href="#x" x="1581" y="488"/><use href="#x" x="1581" y="514"/><use href="#x" x="1581" y="562"/><use href="#x" x="1581" y="608"/><use href="#x" x="1581" y="630"/><use href="#x" x="1581" y="640"/><use href="#x" x="1581" y="843"/>
<use href="#x" x="1597" y="430"/><use href="#x" x="1597" y="843"/><use href="#x" x="890" y="453"/><use href="#x" x="832" y="498"/>
</g>
<!-- yellow dim text -->
<g>
<text class="y" transform="translate(373 466) rotate(-90)">٢,٥</text><text class="y" transform="translate(373 530) rotate(-90)">٢</text><text class="y" transform="translate(373 593) rotate(-90)">١,٩٥</text><text class="y" transform="translate(373 622) rotate(-90)">٠,٣١</text><text class="y" transform="translate(373 640) rotate(-90)">٠,٣٤</text><text class="y" transform="translate(373 666) rotate(-90)">١,٦٣</text><text class="y" transform="translate(373 744) rotate(-90)">٤,٧٨</text><text class="y" transform="translate(373 820) rotate(-90)">١</text>
<text class="y" transform="translate(362 644) rotate(-90)">١٦,٥</text>
<text class="y" transform="translate(716 594) rotate(-90)">١,٤١</text><text class="y" transform="translate(716 622) rotate(-90)">٠,٩</text><text class="y" transform="translate(716 638) rotate(-90)">٠,٣</text><text class="y" transform="translate(716 674) rotate(-90)">٢,٣١</text><text class="y" transform="translate(716 702) rotate(-90)">٠,٥</text><text class="y" transform="translate(716 737) rotate(-90)">٢,٠٩</text><text class="y" transform="translate(716 765) rotate(-90)">٠,٥</text><text class="y" transform="translate(716 812) rotate(-90)">٣,٠٢</text>
<text class="y" transform="translate(632 557) rotate(-90)">١,٥٥</text><text class="y" transform="translate(632 594) rotate(-90)">١,٤١</text>
<text class="y" transform="translate(746 562) rotate(-90)">٠,٣</text><text class="y" transform="translate(746 588) rotate(-90)">١,٨</text><text class="y" transform="translate(746 604) rotate(-90)">١,٨</text>
<text class="y" transform="translate(1022 503) rotate(-90)">٠,٣٤</text><text class="y" transform="translate(1022 521) rotate(-90)">٠,٣١</text><text class="y" transform="translate(1022 550) rotate(-90)">١,٢</text><text class="y" transform="translate(1022 571) rotate(-90)">٠,٣</text><text class="y" transform="translate(1022 598) rotate(-90)">١,٥٥</text>
<text class="y" transform="translate(948 672) rotate(-90)">٠,٢</text><text class="y" transform="translate(948 743) rotate(-90)">٤,٧٨</text><text class="y" transform="translate(948 810) rotate(-90)">٠,٢</text>
<text class="y" transform="translate(1178 648) rotate(-90)">٠,٣</text><text class="y" transform="translate(1178 671) rotate(-90)">١,٣</text><text class="y" transform="translate(1178 743) rotate(-90)">٤,٧٨</text><text class="y" transform="translate(1178 812) rotate(-90)">١,٠٢</text><text class="y" transform="translate(1178 832) rotate(-90)">٠,٧٢</text>
<text class="y" transform="translate(1585 505) rotate(-90)">٠,٨</text><text class="y" transform="translate(1585 541) rotate(-90)">٢</text><text class="y" transform="translate(1585 592) rotate(-90)">١,٩٥</text><text class="y" transform="translate(1585 624) rotate(-90)">٠,٩</text><text class="y" transform="translate(1585 640) rotate(-90)">٠,٣</text><text class="y" transform="translate(1585 750) rotate(-90)">٥,٦٧</text>
<text class="y" transform="translate(1601 644) rotate(-90)">١٦,٥</text>
<text class="y" x="731" y="540">٣</text><text class="y" x="810" y="532">٣</text><text class="y" x="907" y="472" transform="rotate(40 913 470)">٢,٤٥</text>
</g>

<!-- leaders -->
<path d="M671 537L681 527H713M534 636L544 626H580M628 625H680M656 603H703M605 675L615 665H648M504 699L514 689H547M502 731H553M504 762L514 752H547M733 657H785M729 697L739 687H772M723 728H774M730 762L740 752H773M646 827H697M777 603L787 593H812M778 563L789 552H815M930 467L940 458H973M819 500L830 489H862M883 518L895 507H929M945 507H993M913 539H965M897 564L909 554H942M910 592H961M808 604H858M994 492L1005 482H1037M818 676L830 666H861M883 697L894 687H926M879 728H930M879 761L890 750H925M1017 674L1029 663H1060M1110 673L1122 663H1153M1206 675L1218 664H1249M1238 648H1289M1275 831H1322M1288 626H1333M1303 677L1315 667H1346M1401 677L1413 667H1444M1524 637L1535 647H1568M1523 672L1534 663H1567M1418 609L1424 605H1455M1508 609L1518 601H1551" fill="none" stroke="#e8e8e8" stroke-width=".9"/>
<path d="M671 537h0M534 636h0M628 625h0M656 603h0M605 675h0M504 699h0M502 731h0M504 762h0M733 657h0M729 697h0M723 728h0M730 762h0M646 827h0M777 603h0M778 563h0M930 467h0M819 500h0M883 518h0M945 507h0M913 539h0M897 564h0M910 592h0M808 604h0M994 492h0M818 676h0M883 697h0M879 728h0M879 761h0M1017 674h0M1110 673h0M1206 675h0M1238 648h0M1275 831h0M1288 626h0M1303 677h0M1401 677h0M1524 637h0M1523 672h0" stroke="#fff" stroke-width="3.600" stroke-linecap="round" fill="none"/>
<g>
<text class="l" x="678" y="525" textLength="42" lengthAdjust="spacingAndGlyphs">بياض كيماوي ايبض</text><text class="l" x="539" y="624" textLength="42" lengthAdjust="spacingAndGlyphs">بياض كيماوي ايبض</text><text class="l" x="637" y="623" textLength="40" lengthAdjust="spacingAndGlyphs">بياض كيماوي بيج</text><text class="l" x="665" y="601" textLength="38" lengthAdjust="spacingAndGlyphs">بياض كيماوي بيج</text><text class="l" x="615" y="663" textLength="38" lengthAdjust="spacingAndGlyphs">بياض كيماوي بني</text><text class="l" x="509" y="687" textLength="41" lengthAdjust="spacingAndGlyphs">بياض كيماوي ايبض</text><text class="l" x="511" y="729" textLength="40" lengthAdjust="spacingAndGlyphs">بياض كيماوي بيج</text><text class="l" x="509" y="750" textLength="41" lengthAdjust="spacingAndGlyphs">بياض كيماوي ايبض</text>
<text class="l" x="742" y="655" textLength="40" lengthAdjust="spacingAndGlyphs">بياض كيماوي بيج</text><text class="l" x="734" y="685" textLength="41" lengthAdjust="spacingAndGlyphs">بياض كيماوي ايبض</text><text class="l" x="732" y="726" textLength="40" lengthAdjust="spacingAndGlyphs">بياض كيماوي بيج</text><text class="l" x="735" y="750" textLength="41" lengthAdjust="spacingAndGlyphs">بياض كيماوي ايبض</text><text class="l" x="655" y="825" textLength="40" lengthAdjust="spacingAndGlyphs">بياض كيماوي بيج</text>
<text class="l" x="786" y="591" textLength="28" lengthAdjust="spacingAndGlyphs">بياض بيج</text><text class="l" x="789" y="550" textLength="28" lengthAdjust="spacingAndGlyphs">بياض بني</text>
<text class="l" x="936" y="456" textLength="41" lengthAdjust="spacingAndGlyphs">بياض كيماوي ايبض</text><text class="l" x="825" y="487" textLength="41" lengthAdjust="spacingAndGlyphs">بياض كيماوي ايبض</text><text class="l" x="888" y="505" textLength="41" lengthAdjust="spacingAndGlyphs">بياض كيماوي ايبض</text><text class="l" x="953" y="505" textLength="40" lengthAdjust="spacingAndGlyphs">بياض كيماوي بيج</text><text class="l" x="922" y="537" textLength="40" lengthAdjust="spacingAndGlyphs">بياض كيماوي بيج</text><text class="l" x="901" y="552" textLength="41" lengthAdjust="spacingAndGlyphs">بياض كيماوي ايبض</text><text class="l" x="919" y="590" textLength="40" lengthAdjust="spacingAndGlyphs">بياض كيماوي بيج</text><text class="l" x="819" y="602" textLength="39" lengthAdjust="spacingAndGlyphs">بياض كيماوي بيج</text><text class="l" x="999" y="480" textLength="41" lengthAdjust="spacingAndGlyphs">بياض كيماوي ايبض</text>
<text class="l" x="829" y="664" textLength="37" lengthAdjust="spacingAndGlyphs">بياض كيماوي بني</text><text class="l" x="889" y="685" textLength="38" lengthAdjust="spacingAndGlyphs">بياض كيماوي ايبض</text><text class="l" x="888" y="726" textLength="40" lengthAdjust="spacingAndGlyphs">بياض كيماوي بيج</text><text class="l" x="884" y="748" textLength="41" lengthAdjust="spacingAndGlyphs">بياض كيماوي ايبض</text>
<text class="l" x="1022" y="661" textLength="41" lengthAdjust="spacingAndGlyphs">بياض كيماوي ايبض</text><text class="l" x="1115" y="661" textLength="41" lengthAdjust="spacingAndGlyphs">بياض كيماوي ايبض</text><text class="l" x="1210" y="662" textLength="41" lengthAdjust="spacingAndGlyphs">بياض كيماوي ايبض</text><text class="l" x="1247" y="646" textLength="40" lengthAdjust="spacingAndGlyphs">بياض كيماوي بيج</text><text class="l" x="1284" y="829" textLength="39" lengthAdjust="spacingAndGlyphs">بياض كيماوي بيج</text><text class="l" x="1294" y="624" textLength="39" lengthAdjust="spacingAndGlyphs">بياض كيماوي بيج</text>
<text class="l" x="1308" y="665" textLength="41" lengthAdjust="spacingAndGlyphs">بياض كيماوي ايبض</text><text class="l" x="1406" y="665" textLength="41" lengthAdjust="spacingAndGlyphs">بياض كيماوي ايبض</text><text class="l" x="1534" y="645" textLength="41" lengthAdjust="spacingAndGlyphs">بياض كيماوي ايبض</text><text class="l" x="1529" y="661" textLength="41" lengthAdjust="spacingAndGlyphs">بياض كيماوي ايبض</text>
<text class="l" x="1428" y="596" textLength="38" lengthAdjust="spacingAndGlyphs">الدهان: معجون مباشر</text><text class="l" x="1408" y="603" textLength="58" lengthAdjust="spacingAndGlyphs">بارد قابل - طبقة سبع لتعاون ايبض</text>
<text class="l" x="1519" y="592" textLength="37" lengthAdjust="spacingAndGlyphs">ترميمة خليط واقي</text><text class="l" x="1518" y="599" textLength="38" lengthAdjust="spacingAndGlyphs">سبع لتعاون لنانية بني</text>
</g>
<use href="#hand" transform="translate(1584 337) scale(1.450)" fill="#20262e" stroke="#fff" stroke-width="1"/>

<!-- command window -->
<rect x="25" y="893" width="1890" height="4" fill="#3a4352"/>
<rect x="25" y="893" width="31" height="77" fill="#2c333e"/>
<rect x="56" y="897" width="1859" height="46" fill="#c8c8c8"/>
<rect x="56" y="943" width="1859" height="2" fill="#2c333e"/>
<rect x="56" y="945" width="1859" height="24" fill="#fff"/>
<path d="M30 904h20M30 907h20" stroke="#cfcfcf" stroke-width="2" stroke-dasharray="2 1"/>
<path d="M35 918l9 10M44 918l-9 10" stroke="#eee" stroke-width="2.200"/>
<path d="M45 943q2 3 0 5l-2-1-2 2-8 11-2-2 7-12-1-2q2-3 5-3l1 1-2 2 2 2z" fill="#e8e8e8"/>
<text x="59" y="918" class="m">PAN</text>
<text x="59" y="938" class="m">Press ESC or ENTER to exit, or right-click to display shortcut menu.</text>
<use href="#hand" transform="translate(60 945) scale(.95)" fill="#c8c8c8" stroke="#999" stroke-width=".5"/>
<path d="M84 955h9l-4.500 6z" fill="#555"/>
<text x="100" y="962" style="font-size:14px;font-weight:bold;fill:#111" textLength="27" lengthAdjust="spacingAndGlyphs">PAN</text>

<!-- layout tabs -->
<path d="M5 971L14 994H72L82 971Z" fill="#343c49"/><path d="M86 971L84 994H157L163 971Z" fill="#2c333e"/><path d="M167 971L165 994H240L247 971Z" fill="#2c333e"/><path d="M254 971L248 994H268L275 971Z" fill="#2c333e"/>
<text x="23" y="987" style="font-size:14.500px;font-weight:bold;fill:#fff" textLength="44" lengthAdjust="spacingAndGlyphs">Model</text>
<text x="96" y="987" style="font-size:14.500px;fill:#aab0b8" textLength="51" lengthAdjust="spacingAndGlyphs">Layout1</text>
<text x="177" y="987" style="font-size:14.500px;fill:#aab0b8" textLength="52" lengthAdjust="spacingAndGlyphs">Layout2</text>
<path d="M262 978v10M257 983h10" stroke="#9aa0a8" stroke-width="2.200"/>
<text x="0" y="1019" style="font-size:14.500px;fill:#eef0f2" textLength="235" lengthAdjust="spacingAndGlyphs">Press pick button and drag to pan.</text>

<!-- watermark -->
<text x="842" y="955" style="font-family:'DejaVu Sans',sans-serif;font-size:64px;font-weight:bold;fill:rgba(120,120,120,.28)" textLength="230" lengthAdjust="spacingAndGlyphs">مستقل</text>
<text x="842" y="1000" style="font-size:36px;fill:#6c7076;stroke:#6c7076;stroke-width:.4px" textLength="230" lengthAdjust="spacingAndGlyphs">mostaql.com</text>
</svg>
</body></html>
